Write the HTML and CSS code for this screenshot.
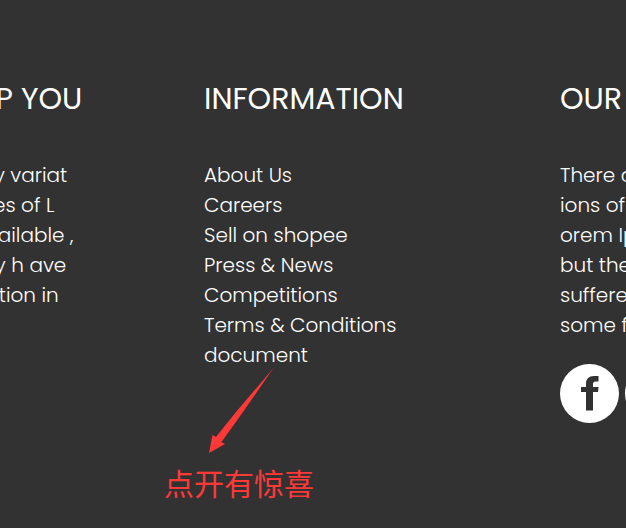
FILE: index.html
```html
<!DOCTYPE html>
<html lang="en">
<head>
<meta charset="utf-8">
<title>Footer</title>
<link rel="stylesheet" href="styles.css">
</head>
<body>
<footer class="footer">
  <section class="column">
    <h2 class="title">LET US HELP YOU</h2>
    <p class="copy">There are many variat<br>ions of passages of L<br>orem Ipsum available ,<br>but the majority h ave<br>suffered altera tion in</p>
  </section>
  <section class="column">
    <h2 class="title">INFORMATION</h2>
    <ul class="links">
      <li><a href="#about">About Us</a></li>
      <li><a href="#careers">Careers</a></li>
      <li><a href="#sell">Sell on shopee</a></li>
      <li><a href="#press">Press &amp; News</a></li>
      <li><a href="#competitions">Competitions</a></li>
      <li><a href="#terms">Terms &amp; Conditions</a></li>
      <li class="document"><a href="#document">document</a>
        <div class="note">
          <svg class="arrow" viewBox="0 0 66 86" aria-hidden="true"><path d="M65.500 0 28 44 8 69 4.500 67 1 85 17 76 13.500 74 35 44Z"/></svg>
          <span class="note-text" lang="zh">点开有惊喜</span>
        </div>
      </li>
    </ul>
  </section>
  <section class="column">
    <h2 class="title">OUR</h2>
    <p class="copy">There are many variat<br>ions of passages of L<br>orem Ipsum available ,<br>but the majority h ave<br>suffered altera tion in<br>some form</p>
    <div class="social">
      <a href="#facebook" aria-label="Facebook"><svg viewBox="0 0 59 59"><circle cx="29.5" cy="29.5" r="29.5" fill="#fff"/><path fill="#323232" d="M38.500 12v5.500h-3q-2.500 0-2.500 2.500V23h5.500l-.5 5H33v18.500h-7v-18.500h-5v-5h5v-3q0-8 8-8Z"/></svg></a>
      <a href="#twitter" aria-label="Twitter"><svg viewBox="0 0 59 59"><circle cx="29.5" cy="29.5" r="29.5" fill="#fff"/></svg></a>
    </div>
  </section>
</footer>
</body>
</html>
```
FILE: styles.css
```css
* { box-sizing: border-box; }
body {
  margin: 0;
  min-height: 100vh;
  overflow: hidden;
  background: #323232;
  color: #fff;
  font: 300 20px/30px Poppins, Inter, "Noto Sans CJK SC", sans-serif;
}
.footer {
  display: grid;
  grid-template-columns: repeat(3, 356px);
  margin-left: -152px;
  padding-top: 78px;
}
.column { white-space: nowrap; }
.title {
  margin: 0 0 40px;
  font-size: 30px;
  line-height: 42px;
  font-weight: 400;
}
.copy, .links { margin: 0; padding: 0; list-style: none; }
a { color: inherit; text-decoration: none; }
.social { display: flex; gap: 6px; margin-top: 24px; }
.social svg { display: block; width: 59px; height: 59px; }
.document { position: relative; }
.note {
  position: absolute;
  top: 28px;
  left: -40px;
  color: #ff3838;
}
.arrow { display: block; width: 66px; height: 86px; margin-left: 44px; fill: currentColor; }
.note-text {
  display: block;
  margin-top: 6px;
  font: 400 30px/44px "Noto Sans CJK SC", sans-serif;
}
```
